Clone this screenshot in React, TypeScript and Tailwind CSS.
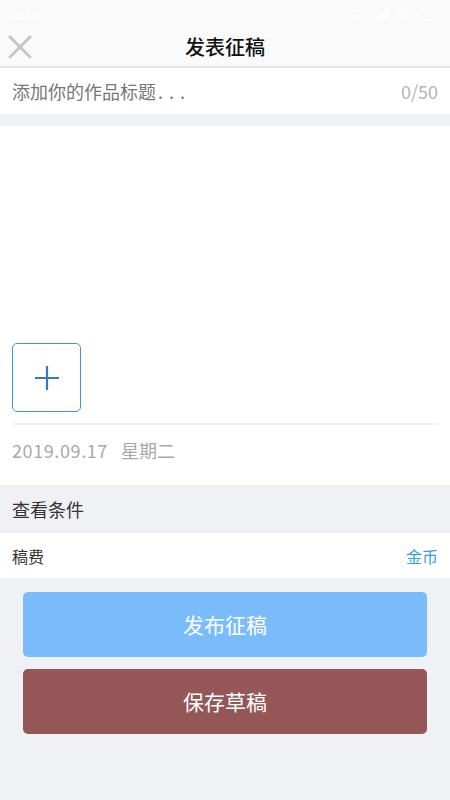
import React from "react";

const font = { fontFamily: '"Noto Sans CJK SC", "Noto Sans", sans-serif' };

export default function App() {
  return (
    <div className="w-[450px] h-[800px] bg-[#f0f1f5] flex flex-col" style={font}>
      {/* header */}
      <div className="h-[66px] bg-[#fafafa] flex flex-col">
        <div className="h-[28px] flex items-center justify-between px-[7px] text-white">
          <span className="text-[13px] leading-none">16:18</span>
          <div className="flex items-center gap-[6px]">
            <svg width="16" height="12" viewBox="0 0 16 12" fill="none" stroke="white" strokeWidth="1.5"><path d="M2 10 L14 2 M4 4 Q8 0 12 4" /></svg>
            <svg width="16" height="12" viewBox="0 0 16 12" fill="white"><rect x="1" y="8" width="3" height="4" /><rect x="5" y="6" width="3" height="6" /><rect x="9" y="3" width="3" height="9" /><rect x="13" y="0" width="3" height="12" /></svg>
            <svg width="16" height="12" viewBox="0 0 16 12" fill="none" stroke="white" strokeWidth="1.5"><path d="M1 4 Q8 -2 15 4 M3.5 7 Q8 3 12.5 7 M6 10 Q8 8.5 10 10" /></svg>
            <div className="w-[26px] h-[12px] rounded-full border border-white text-[8px] leading-[10px] text-center">71</div>
          </div>
        </div>
        <div className="relative flex-1 flex items-center justify-center">
          <svg className="absolute left-[8px] top-[7px]" width="24" height="24" viewBox="0 0 24 24" fill="none" stroke="#c6c6c6" strokeWidth="3" strokeLinecap="round">
            <path d="M2 2 L22 22 M22 2 L2 22" />
          </svg>
          <span className="text-[20px] font-medium text-[#111] leading-none">发表征稿</span>
        </div>
      </div>
      <div className="h-[2px] bg-[#e3e4e8]" />
      {/* title input */}
      <div className="h-[46px] bg-white flex items-center justify-between px-[12px]">
        <span className="text-[18px] text-[#777]">
          添加你的作品标题<span className="tracking-[6px] ml-[2px]">...</span>
        </span>
        <span className="text-[18px] text-[#b5b5b5]">0/50</span>
      </div>
      <div className="h-[12px]" />
      {/* content */}
      <div className="h-[359px] bg-white flex flex-col px-[12px]">
        <div className="flex-1" />
        <div className="w-[69px] h-[69px] border border-[#3b95e0] rounded-[5px] flex items-center justify-center">
          <svg width="26" height="26" viewBox="0 0 26 26" stroke="#3a78bd" strokeWidth="2.2">
            <path d="M13 1 V25 M1 13 H25" />
          </svg>
        </div>
        <div className="h-[2px] bg-[#f1f1f1] mt-[11px]" />
        <div className="h-[50px] flex items-center text-[18px] text-[#a9a9a9]">
          <span className="tracking-[0.6px]">2019.09.17</span>
          <span className="ml-[13px]">星期二</span>
        </div>
        <div className="h-[10px]" />
      </div>
      {/* conditions */}
      <div className="h-[48px] flex items-center px-[12px] text-[18px] text-[#333]">查看条件</div>
      <div className="h-[45px] bg-white flex items-center justify-between px-[12px]">
        <span className="text-[16px] text-[#333]">稿费</span>
        <span className="text-[16px] text-[#3a9de2]">金币</span>
      </div>
      <div className="flex flex-col gap-[12px] px-[23px] pt-[14px]">
        <div className="h-[65px] rounded-[5px] bg-[#7abcfb] flex items-center justify-center text-white text-[21px]">发布征稿</div>
        <div className="h-[65px] rounded-[5px] bg-[#945656] flex items-center justify-center text-white text-[21px]">保存草稿</div>
      </div>
    </div>
  );
}
